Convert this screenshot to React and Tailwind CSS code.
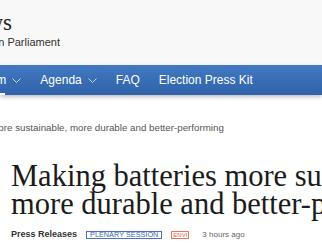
const navItems = [
    { label: 'Newsroom', menu: true, active: true },
    { label: 'Agenda', menu: true },
    { label: 'FAQ' },
    { label: 'Election Press Kit' },
]

function Caret() {
    return (
        <svg width="9" height="5" viewBox="0 0 9 5" fill="none" className="mt-[1px]">
            <polyline points="0.5,0.5 4.5,4.5 8.5,0.5" stroke="#c6d6ee" strokeWidth="1" />
        </svg>
    )
}

export default function App() {
    return (
        <div className="w-[322px] h-[247px] overflow-hidden bg-white font-['Liberation_Sans',Arial,sans-serif]">
            <header className="bg-[#f8f8f8] h-[65px] pt-[11px]">
                <div className="flex flex-col items-end w-[60px]">
                    <span className="whitespace-nowrap font-['Liberation_Serif','Times_New_Roman',serif] text-[23px] leading-[24px] text-[#222] mr-[48px]">
                        News
                    </span>
                    <span className="whitespace-nowrap text-[11px] leading-[13px] text-[#333] mt-[1px]">
                        European Parliament
                    </span>
                </div>
            </header>

            <nav className="relative h-[30px] bg-gradient-to-b from-[#4279c2] to-[#2f62a9] shadow-[0_2px_4px_rgba(0,0,0,0.25)]">
                <ul className="flex items-center h-full ml-[-51px] gap-[19px] text-white text-[12px]">
                    {navItems.map((item) => (
                        <li key={item.label} className="relative flex items-center h-full gap-[6px] whitespace-nowrap">
                            {item.label}
                            {item.menu && <Caret />}
                            {item.active && <span className="absolute bottom-[0px] left-0 right-[16px] h-[2px] bg-white" />}
                        </li>
                    ))}
                </ul>
            </nav>

            <div className="pt-[27px] whitespace-nowrap text-[9.75px] leading-[12px] text-[#555] ml-[-84px]">
                Making batteries more sustainable, more durable and better-performing
            </div>

            <main className="px-[11px] pt-[28px]">
                <h1 className="whitespace-nowrap font-['Liberation_Serif','Times_New_Roman',serif] text-[30.5px] leading-[28px] text-[#1b1b1b]">
                    Making batteries more sustainable,
                    <br />
                    more durable and better-performing
                </h1>
                <div className="flex items-center mt-[12px] h-[10px] whitespace-nowrap">
                    <span className="font-bold text-[9px] text-[#333]">Press Releases</span>
                    <span className="ml-[9px] border border-[#4a72c4] text-[#3f66b8] text-[7.3px] leading-[6px] px-[3px]">
                        PLENARY SESSION
                    </span>
                    <span className="ml-[9px] border border-[#e8735f] text-[#e0604c] text-[6px] leading-[6px] px-[1px]">
                        ENVI
                    </span>
                    <span className="ml-[13px] text-[8px] text-[#666]">3 hours ago</span>
                </div>
            </main>
        </div>
    )
}
